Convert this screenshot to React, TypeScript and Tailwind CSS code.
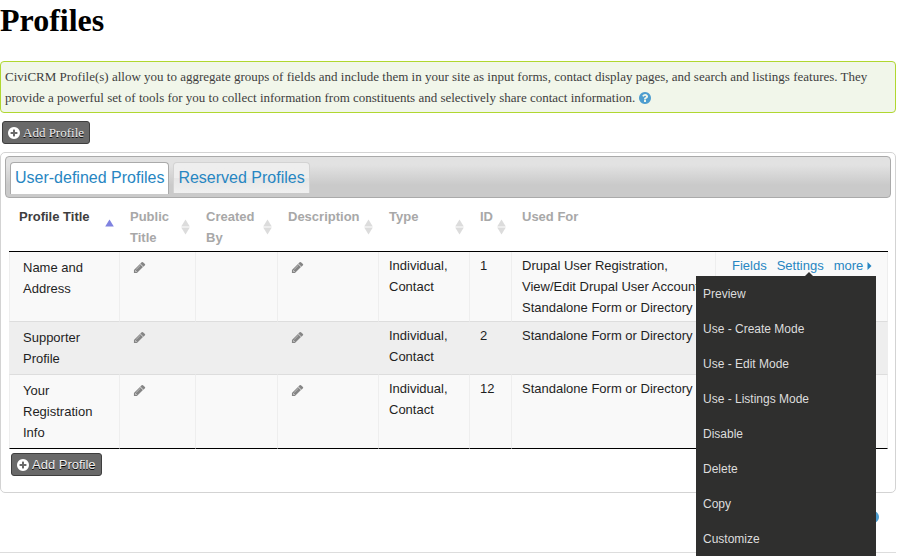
import React from "react";

const CIRCLE =
  "M1664 896q0 209-103 385.5t-279.5 279.5-385.5 103-385.5-103-279.5-279.5-103-385.5 103-385.5 279.5-279.5 385.5-103 385.5 103 279.5 279.5 103 385.5z";
const PLUS =
  "M1344 960v-128q0-26-19-45t-45-19h-256v-256q0-26-19-45t-45-19h-128q-26 0-45 19t-19 45v256h-256q-26 0-45 19t-19 45v128q0 26 19 45t45 19h256v256q0 26 19 45t45 19h128q26 0 45-19t19-45v-256h256q26 0 45-19t19-45z";
const QUESTION =
  "M1024 1376v-192q0-14-9-23t-23-9h-192q-14 0-23 9t-9 23v192q0 14 9 23t23 9h192q14 0 23-9t9-23zm256-672q0-88-55.5-163t-138.5-116-170-41q-243 0-371 213-15 24 8 42l132 100q7 6 19 6 16 0 25-12 53-68 86-92 34-24 86-24 48 0 85.5 26t37.5 59q0 38-20 61t-68 45q-63 28-115.5 86.5t-52.5 125.5v36q0 14 9 23t23 9h192q14 0 23-9t9-23q0-19 21.5-49.5t54.5-49.5q32-18 49-28.5t46-35 44.5-48 28-60.5 12.5-81z";
const PENCIL =
  "M450 1510l60-60-165-165-60 60v75h90v90h75zM960 416l416 416-832 832h-416v-416zM1014 608q0-22-22-22-10 0-17 7l-542 542q-7 7-7 17 0 22 22 22 10 0 17-7l542-542q7-7 7-17zM1683 512q0 53-37 90l-200 176-446-426 196-175q36-38 90-38 53 0 91 38l265 244q37 39 37 91z";

function Glyph({ d, className = "size-[14px]" }: { d: string; className?: string }) {
  return (
    <svg viewBox="0 0 1792 1792" fillRule="evenodd" fill="currentColor" aria-hidden="true" className={`shrink-0 ${className}`}>
      <path d={d} />
    </svg>
  );
}

function HelpButton() {
  return (
    <button type="button" aria-label="Help" className="-ml-px inline-block align-[-3px] text-[#4d9dcf]">
      <Glyph d={`${CIRCLE} ${QUESTION}`} />
    </button>
  );
}

function EditButton({ label }: { label: string }) {
  return (
    <button type="button" aria-label={label} className="px-[3px] py-[6px] text-[#858585]">
      <Glyph d={PENCIL} className="size-[13px]" />
    </button>
  );
}

function AddProfileButton({ className = "" }: { className?: string }) {
  return (
    <button
      type="button"
      className={`flex h-[23px] items-center gap-[2px] rounded-[3px] border border-[#3e3e3e] bg-[#696969] pr-[5px] pl-1 text-[13px] text-[#f0f0f0] [text-shadow:0_1px_0_black] ${className}`}
    >
      <Glyph d={`${CIRCLE} ${PLUS}`} className="size-[14px] text-white" />
      Add Profile
    </button>
  );
}

function SortIcon({ active }: { active?: boolean }) {
  return (
    <svg viewBox="0 0 9 16" aria-hidden="true" className="h-4 w-[9px] shrink-0 self-center">
      <path d="M4.500 0.500 8.800 7.500H0.200z" fill={active ? "#7f82e0" : "#dcdcdc"} />
      {!active && <path d="M4.500 15.500 8.800 8.500H0.200z" fill="#dcdcdc" />}
    </svg>
  );
}

const columns = [
  { title: "Profile Title", width: "w-[111px]", active: true },
  { title: "Public Title", width: "w-[76px]" },
  { title: "Created By", width: "w-[82px]" },
  { title: "Description", width: "w-[101px]" },
  { title: "Type", width: "w-[91px]" },
  { title: "ID", width: "w-[42px]" },
];

const rows = [
  {
    title: "Name and Address",
    id: 1,
    uses: ["Drupal User Registration,", "View/Edit Drupal User Account,", "Standalone Form or Directory"],
    active: true,
  },
  { title: "Supporter Profile", id: 2, uses: ["Standalone Form or Directory"] },
  { title: "Your Registration Info", id: 12, uses: ["Standalone Form or Directory"] },
];

const menuItems = [
  "Preview",
  "Use - Create Mode",
  "Use - Edit Mode",
  "Use - Listings Mode",
  "Disable",
  "Delete",
  "Copy",
  "Customize",
];

function RowActions() {
  return (
    <div className="relative flex gap-[10px] pl-[6px] text-[#2786c2]">
      <a href="#fields">Fields</a>
      <a href="#settings">Settings</a>
      <button type="button" aria-expanded="true" className="flex items-center gap-1">
        more
        <svg viewBox="0 0 5 8" fill="currentColor" aria-hidden="true" className="h-2 w-[5px]">
          <path d="M0.500 0 4.500 4 0.500 8z" />
        </svg>
      </button>
      <div className="absolute top-full right-px z-10 w-[180px] bg-[#2f2f2e]">
        <svg viewBox="0 0 8 4" fill="#2f2f2e" aria-hidden="true" className="absolute bottom-full left-[109px] h-1 w-2">
          <path d="M0 4 4 0 8 4z" />
        </svg>
        <ul>
          {menuItems.map((item) => (
            <li key={item}>
              <a href="#action" className="block px-[7px] pt-[2px] text-[12px] leading-[33px] text-[#dddddd]">
                {item}
              </a>
            </li>
          ))}
        </ul>
      </div>
    </div>
  );
}

const cell = "border-r border-r-[#eeeeee] border-b px-[10px] py-[3px]";

export default function App() {
  return (
    <div className="mr-1 bg-white pb-1 font-['Liberation_Serif',serif] text-[13px] leading-[21px]">
      <h1 className="pt-[2px] text-[32px] leading-[37px] font-bold text-black">Profiles</h1>

      <div className="mt-[22px] rounded-[4px] border border-[#b0d730] bg-[#f1f6ea] p-1 text-[#3e3e3e]">
        CiviCRM Profile(s) allow you to aggregate groups of fields and include them in your site as input forms, contact
        display pages, and search and listings features. They provide a powerful set of tools for you to collect
        information from constituents and selectively share contact information. <HelpButton />
      </div>

      <AddProfileButton className="mt-2 ml-[2px]" />

      <div className="mt-2 rounded-[5px] border border-[#d3d3d3] px-1 pt-[3px] pb-4 font-['Liberation_Sans',sans-serif]">
        <div
          role="tablist"
          className="flex h-[42px] items-start gap-1 rounded-[4px] border border-[#aaaaaa] bg-linear-to-b from-[#e2e2e2] from-20% to-[#cacaca] to-70% px-1 pt-[5px] text-base"
        >
          <button
            type="button"
            role="tab"
            aria-selected="true"
            className="h-8 rounded-t-[4px] border border-b-0 border-[#aaaaaa] bg-white px-1 pb-[2px] text-[#2786c2]"
          >
            User-defined Profiles
          </button>
          <button
            type="button"
            role="tab"
            aria-selected="false"
            className="h-[31px] rounded-t-[4px] border border-b-0 border-[#d3d3d3] bg-linear-to-b from-[#eeeeee] from-50% via-[#e6e6e6] via-50% to-[#f0f0f0] px-1 pb-px text-[#2786c2]"
          >
            Reserved Profiles
          </button>
        </div>

        <div className="pt-[5px] pr-[3px] pl-1">
          <table className="w-full table-fixed border-separate border-spacing-0 text-[#1f1f1f]">
            <thead>
              <tr className="text-left align-top">
                {columns.map((c) => (
                  <th
                    key={c.title}
                    aria-sort={c.active ? "ascending" : "none"}
                    className={`border-b border-black py-[3px] pr-[6px] pl-[10px] ${c.width} ${c.active ? "text-[#3e3e3e]" : "text-[#a8a8a8]"}`}
                  >
                    <button type="button" className="flex h-[42px] w-full items-start justify-between text-left">
                      <span>{c.title}</span>
                      <SortIcon active={c.active} />
                    </button>
                  </th>
                ))}
                <th className="w-[204px] border-b border-black px-[10px] py-[3px] text-[#a8a8a8]">Used For</th>
                <th className="border-b border-black" aria-label="Actions" />
              </tr>
            </thead>
            <tbody>
              {rows.map((r, i) => {
                const line = i === rows.length - 1 ? "border-b-black" : "border-b-[#dddddd]";
                const td = `${cell} ${line}`;
                return (
                  <tr key={r.id} className={`align-top ${i % 2 ? "bg-[#eeeeee]" : "bg-[#f9f9f9]"}`}>
                    <td className={`${td} border-l border-l-[#eeeeee]`}>
                      <div className="px-[3px] py-[2px]">{r.title}</div>
                    </td>
                    <td className={td}>
                      <EditButton label="Edit public title" />
                    </td>
                    <td className={td} />
                    <td className={td}>
                      <EditButton label="Edit description" />
                    </td>
                    <td className={td}>Individual, Contact</td>
                    <td className={td}>{r.id}</td>
                    <td className={`${td} whitespace-nowrap`}>
                      {r.uses.map((u) => (
                        <div key={u}>{u}</div>
                      ))}
                    </td>
                    <td className={td}>{r.active && <RowActions />}</td>
                  </tr>
                );
              })}
            </tbody>
          </table>
          <AddProfileButton className="mt-1 ml-[2px]" />
        </div>
      </div>

      <footer className="flex h-[60px] justify-end border-b border-[#dddddd] pt-[13px] pr-4">
        <div>
          <HelpButton />
        </div>
      </footer>
    </div>
  );
}
